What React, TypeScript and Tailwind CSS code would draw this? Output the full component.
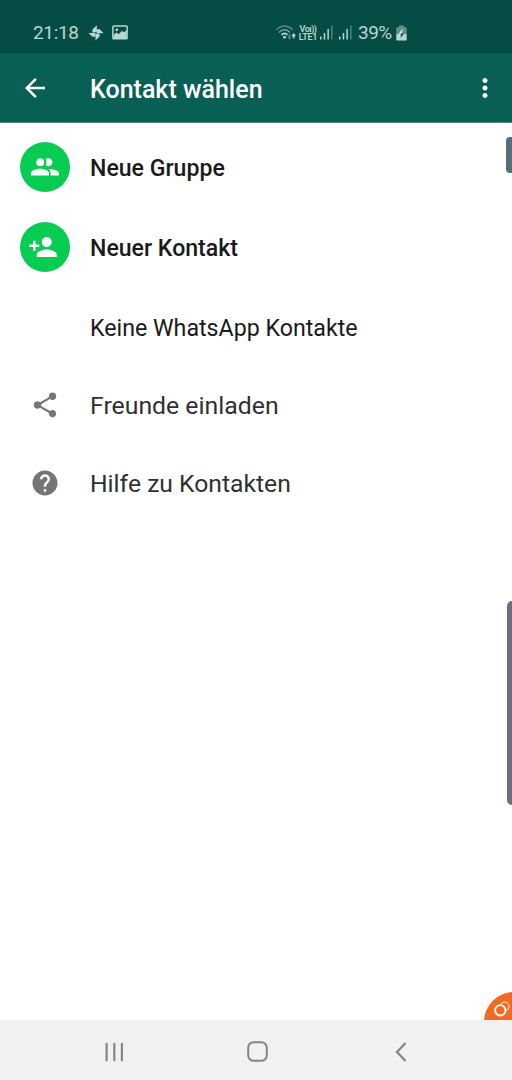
import type { ReactNode } from "react"
import { MdArrowBack, MdHelp, MdMoreVert, MdPersonAdd, MdShare } from "react-icons/md"

interface Entry {
  label: string
  icon: ReactNode
  rowClass: string
  textClass: string
}

function PinwheelIcon() {
  return (
    <svg className="h-4 w-4" viewBox="0 0 16 16" fill="currentColor">
      <path d="M8.800.3V7.500H4.400V4.500Z" />
      <path d="M15.600 8.300H8.500V4.300h3.300Z" />
      <path d="M7.500 15.600V8.500h4v3Z" />
      <path d="M.5 8H7.500v3.700H4.300Z" />
      <circle cx="8" cy="8" r="0.8" fill="#054d44" />
    </svg>
  )
}

function PictureIcon() {
  return (
    <svg className="h-[15px] w-4" viewBox="0 0 16 15">
      <rect x="0.9" y="0.9" width="14.2" height="12.800" rx="0.8" fill="none" stroke="currentColor" strokeWidth="1.500" />
      <circle cx="4.800" cy="4.800" r="1.400" fill="currentColor" />
      <path d="M1.500 10 4.500 7.500l2.200 1.700L10 5.800l1.700 1.500L14.500 5.500V13.500h-13Z" fill="currentColor" />
    </svg>
  )
}

function WifiIcon() {
  return (
    <svg className="h-4 w-5" viewBox="0 0 20 16" fill="none" stroke="currentColor" strokeWidth="1.500">
      <path d="M.5 5C5-.200 12-.200 16.500 5" opacity="0.45" />
      <path d="M3 7.500c3.300-3.600 7.800-3.600 11 0" opacity="0.65" />
      <path d="M5.500 10c2-2.200 4.200-2.200 6 0" strokeWidth="1.600" />
      <circle cx="8.500" cy="12.200" r="1.400" fill="currentColor" stroke="none" />
      <path d="M13.500 9v4M12 11.700l1.500 1.800 1.500-1.800" opacity="0.4" />
      <path d="M17.700 13.500V9.500M16.200 11l1.500-1.800 1.500 1.800" />
    </svg>
  )
}

function SignalIcon() {
  return (
    <svg className="h-[15px] w-[13px]" viewBox="0 0 13 15" fill="currentColor">
      <rect x="0" y="11.500" width="1.500" height="3" />
      <rect x="3.700" y="8" width="1.500" height="6.500" />
      <rect x="7.400" y="4" width="1.500" height="10.500" />
      <rect x="11.100" y="0.500" width="1.500" height="14" opacity="0.4" />
    </svg>
  )
}

function BatteryIcon() {
  return (
    <svg className="h-4 w-[11px]" viewBox="0 0 11 16">
      <path d="M3 .5h5v1.700h2q.7 0 .7.700v6.300H.300V2.900q0-.700.700-.700h2Z" fill="currentColor" opacity="0.5" />
      <path d="M.3 9h10.400v5.700q0 .800-.700.800H1q-.700 0-.700-.800Z" fill="currentColor" />
      <path d="M6.800 3.500 2.500 9h3Z" fill="#e4f2f0" />
      <path d="M3.500 8.700H8L4.300 13l.800-3.200Z" fill="#054d44" />
    </svg>
  )
}

function GroupIcon() {
  return (
    <svg className="h-[18px] w-7" viewBox="0 0 28 18" fill="currentColor">
      <circle cx="9.200" cy="4.200" r="3.900" />
      <path d="M14.700 1.400a3.900 3.900 0 1 1 0 5.600 6 6 0 0 0 0-5.600Z" />
      <path d="M0 17.500v-2C0 12.300 5 10.800 9 10.800s9 1.500 9 4.700v2Z" />
      <path d="M17.800 10.900c4.200.100 10.200 1.500 10.200 4.600v2h-8.400v-2c0-2-.500-3.500-1.800-4.600Z" />
    </svg>
  )
}

const entries: Entry[] = [
  {
    label: "Neue Gruppe",
    icon: (
      <div className="flex size-[50px] items-center justify-center rounded-full bg-[#06cc51] text-white">
        <GroupIcon />
      </div>
    ),
    rowClass: "h-20",
    textClass: "pt-1 text-[23.1px] font-medium text-[#1a1a1a]",
  },
  {
    label: "Neuer Kontakt",
    icon: (
      <div className="flex size-[50px] items-center justify-center rounded-full bg-[#06cc51] pr-1 text-white">
        <MdPersonAdd size={30} />
      </div>
    ),
    rowClass: "h-20",
    textClass: "pt-1 text-[23.1px] font-medium text-[#1a1a1a]",
  },
  {
    label: "Keine WhatsApp Kontakte",
    icon: null,
    rowClass: "h-20",
    textClass: "pt-1 text-[23.2px] text-[#1a1a1a]",
  },
  {
    label: "Freunde einladen",
    icon: <MdShare size={30} />,
    rowClass: "h-[76px]",
    textClass: "pt-[3px] text-[24.8px] text-[#303030]",
  },
  {
    label: "Hilfe zu Kontakten",
    icon: <MdHelp size={30} />,
    rowClass: "h-[79px]",
    textClass: "pt-[3px] text-[24.7px] text-[#303030]",
  },
]

export default function App() {
  return (
    <div className="relative flex h-[1080px] w-[512px] flex-col overflow-hidden bg-white font-['Roboto',sans-serif]">
      {/* Status bar */}
      <div className="flex h-[53px] shrink-0 items-center bg-[#054d44] pt-3 pl-[33px] text-[#b9d6d1]">
        <span className="w-[55px] text-[19px] leading-none tracking-[-0.35px]">21:18</span>
        <PinwheelIcon />
        <div className="ml-2">
          <PictureIcon />
        </div>
        <div className="ml-[148px] flex items-center">
          <WifiIcon />
          <div className="ml-0.5 flex w-[20px] flex-col items-center text-[9px] leading-[8px] font-semibold">
            <span className="tracking-[-0.5px] whitespace-nowrap">Voı))</span>
            <span className="tracking-[-0.3px]">LTE1</span>
          </div>
          <div className="ml-0.5 flex gap-1.5">
            <SignalIcon />
            <SignalIcon />
          </div>
          <span className="ml-[6px] w-[38px] text-[19px] leading-none tracking-[-0.5px]">39%</span>
          <BatteryIcon />
        </div>
      </div>

      {/* App bar */}
      <header className="flex h-[70px] shrink-0 items-center border-b border-[#4b8c83] bg-[#085f54] pr-3 pl-5 text-white">
        <button aria-label="Zurück">
          <MdArrowBack size={30} />
        </button>
        <h1 className="ml-10 flex-1 pt-[3px] text-[25px] leading-none font-medium">Kontakt wählen</h1>
        <button aria-label="Mehr">
          <MdMoreVert size={30} />
        </button>
      </header>

      {/* Contact options */}
      <main className="flex-1 pt-1">
        {entries.map((entry) => (
          <div key={entry.label} className={`flex items-center pl-5 ${entry.rowClass}`}>
            <div className="flex w-[50px] justify-center text-[#757575]">{entry.icon}</div>
            <span className={`ml-5 leading-none whitespace-nowrap ${entry.textClass}`}>{entry.label}</span>
          </div>
        ))}
      </main>

      {/* Navigation bar */}
      <nav className="flex h-[60px] shrink-0 items-center bg-[#f1f1f1] pt-[3px] pl-[104px] text-[#858585]">
        <svg className="h-5 w-5" viewBox="0 0 20 20" stroke="currentColor" strokeWidth="2.200" strokeLinecap="round">
          <path d="M2.600 1.800v16.500M10.300 1.800v16.500M17.900 1.800v16.500" />
        </svg>
        <svg className="ml-[123px] h-[21px] w-[21px]" viewBox="0 0 21 21" fill="none" stroke="currentColor" strokeWidth="2">
          <rect x="1.200" y="1.200" width="18.600" height="18.600" rx="5.500" />
        </svg>
        <svg className="ml-[127px] h-5 w-3" viewBox="0 0 12 20" fill="none" stroke="currentColor" strokeWidth="2.200">
          <path d="M10.500 1 2 10l8.500 9" />
        </svg>
      </nav>

      {/* Scroll thumb, edge panel handle and floating bubble */}
      <div className="absolute top-[137px] right-0 h-9 w-[6px] rounded-l-[4px] bg-[#546e7a]" />
      <div className="absolute top-[601px] right-0 h-[204px] w-[5px] rounded-l-[5px] bg-[#6f6c7b]" />
      <div className="absolute right-0 bottom-[60px] h-[28px] w-[29px] overflow-hidden">
        <svg className="h-[28px] w-[29px]" viewBox="0 0 29 28" fill="none">
          <circle cx="31" cy="30" r="30" fill="#f26a21" />
          <circle cx="21.700" cy="14.300" r="4.300" stroke="#fdc08f" strokeWidth="1.600" />
          <circle cx="17.300" cy="18.300" r="5.200" fill="#f26a21" stroke="#fff" strokeWidth="1.900" />
        </svg>
      </div>
    </div>
  )
}
